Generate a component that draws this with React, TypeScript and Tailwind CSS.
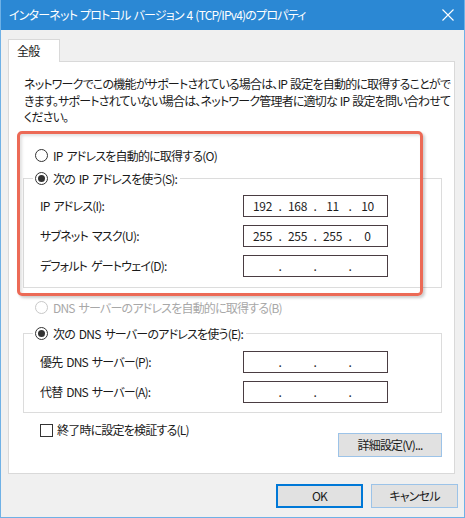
import React from "react";

const font = "font-['Noto_Sans_CJK_JP','Noto_Sans',sans-serif] [font-feature-settings:'palt']";

function Radio({ checked, disabled }: { checked?: boolean; disabled?: boolean }) {
  return (
    <span
      className={`flex h-[13px] w-[13px] shrink-0 items-center justify-center rounded-full border bg-white ${
        disabled ? "border-[#c8c8c8]" : "border-[#333333]"
      }`}
    >
      {checked && <span className="h-[7px] w-[7px] rounded-full bg-[#333333]" />}
    </span>
  );
}

function IpField({ parts }: { parts: string[] }) {
  return (
    <div className="flex h-[22px] w-[145px] items-center border border-[#4a3d42] bg-white pl-[3px] text-[12px] tracking-[-0.3px] text-[#1e1e1e]">
      {parts.map((p, i) => (
        <React.Fragment key={i}>
          <span className="flex w-[31px] justify-center">{p}</span>
          {i < 3 && <span className="flex w-[4px] justify-center">.</span>}
        </React.Fragment>
      ))}
    </div>
  );
}

function FieldRow({ label, parts }: { label: string; parts: string[] }) {
  return (
    <div className="flex h-[22px] items-center">
      <span className="w-[219px] pl-[16px]">{label}</span>
      <IpField parts={parts} />
    </div>
  );
}

export default function App() {
  return (
    <div
      className={`relative flex h-[518px] w-[465px] flex-col overflow-hidden border-x border-b border-[#6fb1e6] bg-[#f0f0f0] text-[12px] leading-[16px] tracking-[-0.8px] [word-spacing:2px] text-[#1a1a1a] ${font}`}
    >
      {/* title bar */}
      <div className="-mx-px flex h-[30px] shrink-0 items-center justify-between bg-[#2b88d4] pl-[9px] pr-[10px] text-white">
        <span className="text-[12px] [word-spacing:1px]">インターネット プロトコル バージョン 4 (TCP/IPv4)のプロパティ</span>
        <svg width="12" height="12" viewBox="0 0 12 12" className="mr-[1px]">
          <path d="M0.5 0.5 L11.5 11.5 M11.5 0.5 L0.5 11.5" stroke="white" strokeWidth="1.1" fill="none" />
        </svg>
      </div>

      <div className="flex flex-col pl-[7px] pt-[9px]">
        {/* tab */}
        <div className="relative z-10 -mb-px flex h-[23px] w-[52px] items-center border-x border-t border-[#d9d9d9] bg-white pl-[8px]">
          全般
        </div>
        {/* panel */}
        <div className="flex h-[413px] w-[447px] flex-col border border-[#d9d9d9] bg-white">
          <div className="whitespace-nowrap pl-[15px] pt-[14px] leading-[16.5px] [word-spacing:1px]">
            ネットワークでこの機能がサポートされている場合は、IP 設定を自動的に取得することがで
            <br />
            きます。サポートされていない場合は、ネットワーク管理者に適切な IP 設定を問い合わせて
            <br />
            ください。
          </div>

          <div className="ml-[26px] mt-[22px] flex h-[16px] items-center gap-[5px]">
            <Radio />
            <span>IP アドレスを自動的に取得する(O)</span>
          </div>

          <fieldset className="ml-[14px] mt-[7px] w-[419px] border border-[#dcdcdc] pb-[10px]">
            <legend className="ml-[9px] flex h-[16px] items-center gap-[5px] pl-[2px] pr-[3px]">
              <Radio checked />
              <span>次の IP アドレスを使う(S):</span>
            </legend>
            <div className="mt-[8px] flex flex-col gap-[8px]">
              <FieldRow label="IP アドレス(I):" parts={["192", "168", "11", "10"]} />
              <FieldRow label="サブネット マスク(U):" parts={["255", "255", "255", "0"]} />
              <FieldRow label="デフォルト ゲートウェイ(D):" parts={["", "", "", ""]} />
            </div>
          </fieldset>

          <div className="ml-[26px] mt-[12px] flex h-[16px] items-center gap-[5px] text-[#a8a8a8]">
            <Radio disabled />
            <span>DNS サーバーのアドレスを自動的に取得する(B)</span>
          </div>

          <fieldset className="ml-[14px] mt-[10px] w-[419px] border border-[#dcdcdc] pb-[9px]">
            <legend className="ml-[9px] flex h-[16px] items-center gap-[5px] pl-[2px] pr-[3px]">
              <Radio checked />
              <span>次の DNS サーバーのアドレスを使う(E):</span>
            </legend>
            <div className="mt-[9px] flex flex-col gap-[8px]">
              <FieldRow label="優先 DNS サーバー(P):" parts={["", "", "", ""]} />
              <FieldRow label="代替 DNS サーバー(A):" parts={["", "", "", ""]} />
            </div>
          </fieldset>

          <div className="flex items-start justify-between pr-[12px]">
            <div className="ml-[31px] mt-[11px] flex h-[13px] items-center gap-[4px]">
              <span className="h-[13px] w-[13px] border border-[#333333] bg-white" />
              <span>終了時に設定を検証する(L)</span>
            </div>
            <button className="mt-[20px] flex h-[24px] w-[104px] items-center justify-center border border-[#9cc3e8] bg-[#e1e1e1] text-[12px]">
              詳細設定(V)...
            </button>
          </div>
        </div>
      </div>

      {/* dialog buttons */}
      <div className="mt-[10px] flex justify-end gap-[8px] pr-[6px]">
        <button className="flex h-[24px] w-[87px] items-center justify-center border-2 border-[#0078d7] bg-[#e1e1e1] text-[12px]">
          OK
        </button>
        <button className="flex h-[24px] w-[87px] items-center justify-center border border-[#9cc3e8] bg-[#e1e1e1] text-[12px]">
          キャンセル
        </button>
      </div>

      {/* red annotation overlay */}
      <div className="pointer-events-none absolute left-[16px] top-[131px] h-[165px] w-[406px] rounded-[5px] border-[3px] border-[#ec6a56] shadow-[2px_2px_3px_rgba(0,0,0,0.2),inset_2px_2px_3px_rgba(0,0,0,0.12)]" />
    </div>
  );
}
